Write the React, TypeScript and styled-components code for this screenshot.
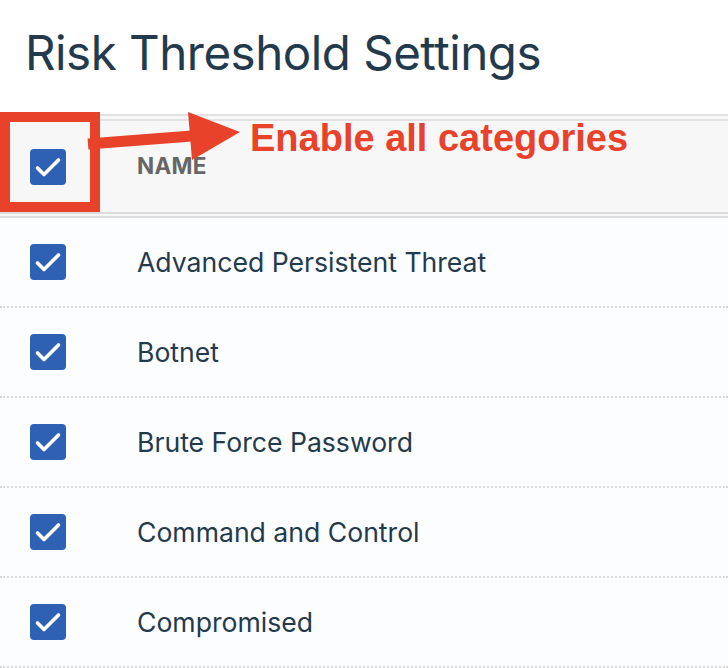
import * as React from 'react';
import styled, { createGlobalStyle } from 'styled-components';

const GlobalStyle = createGlobalStyle`
	html, body {
		margin: 0;
		padding: 0;
		background: #ffffff;
	}
	body {
		font-family: Inter, 'Noto Sans', sans-serif;
		-webkit-font-smoothing: antialiased;
	}
`;

const CATEGORIES = [
	'Advanced Persistent Threat',
	'Botnet',
	'Brute Force Password',
	'Command and Control',
	'Compromised'
];

const Page = styled.div`
	width: 728px;
	height: 668px;
	overflow: hidden;
	display: flex;
	flex-direction: column;
`;

const Title = styled.h1`
	margin: 29px 0 0 25px;
	font-size: 47.5px;
	line-height: 48px;
	font-weight: 400;
	letter-spacing: -0.5px;
	color: #233a4d;
`;

const TableWrap = styled.div`
	position: relative;
	margin-top: 37px;
`;

const HeaderRow = styled.div`
	display: flex;
	align-items: center;
	height: 91px;
	background: #f7f7f7;
	border-top: 7px double #e2e2e2;
	border-bottom: 6px double #dcdcdc;
`;

const Row = styled.div`
	display: flex;
	align-items: center;
	height: 88px;
	background: #fcfdfe;
	border-bottom: 2px dotted #dadada;
`;

const CheckCell = styled.div`
	flex: 0 0 137px;
	padding-left: 30px;
	box-sizing: border-box;
	display: flex;
	align-items: center;
`;

const Box = styled.span`
	width: 36px;
	height: 36px;
	border-radius: 4px;
	background: #2e60b4;
	display: flex;
	align-items: center;
	justify-content: center;
`;

const HeadLabel = styled.span`
	font-size: 22.5px;
	line-height: 1;
	font-weight: 700;
	color: #666666;
	text-transform: uppercase;
	letter-spacing: 0.3px;
`;

const Name = styled.span`
	font-size: 26.6px;
	line-height: 1;
	font-weight: 400;
	color: #233a4d;
`;

const Highlight = styled.div`
	position: absolute;
	left: 0;
	top: -2px;
	width: 100px;
	height: 100px;
	box-sizing: border-box;
	border: 10px solid #e8422a;
`;

const Arrow = styled.svg`
	position: absolute;
	left: 80px;
	top: -9px;
	width: 170px;
	height: 60px;
`;

const Callout = styled.span`
	position: absolute;
	left: 250px;
	top: 4.5px;
	font-family: 'Liberation Sans', Arial, sans-serif;
	font-size: 38px;
	line-height: 1;
	font-weight: 700;
	color: #e8422a;
	white-space: nowrap;
`;

const Check: React.FC = () => (
	<Box>
		<svg width="36" height="36" viewBox="0 0 36 36">
			<polyline
				points="7.5,19 14,25.5 28.5,11"
				fill="none"
				stroke="#ffffff"
				strokeWidth="3.6"
				strokeLinecap="round"
				strokeLinejoin="round"
			/>
		</svg>
	</Box>
);

const App: React.FC = () => {
	return (
		<Page>
			<GlobalStyle />
			<Title>Risk Threshold Settings</Title>
			<TableWrap>
				<HeaderRow>
					<CheckCell>
						<Check />
					</CheckCell>
					<HeadLabel>Name</HeadLabel>
				</HeaderRow>
				{CATEGORIES.map(c => (
					<Row key={c}>
						<CheckCell>
							<Check />
						</CheckCell>
						<Name>{c}</Name>
					</Row>
				))}
				<Highlight />
				{/* annotation arrow, coords in page space */}
				<Arrow viewBox="80 105 170 60">
					<line x1="88" y1="144" x2="192" y2="136" stroke="#e8422a" strokeWidth="11" />
					<polygon points="188,112 240,132 192,160" fill="#e8422a" />
				</Arrow>
				<Callout>Enable all categories</Callout>
			</TableWrap>
		</Page>
	);
};

export default App;
